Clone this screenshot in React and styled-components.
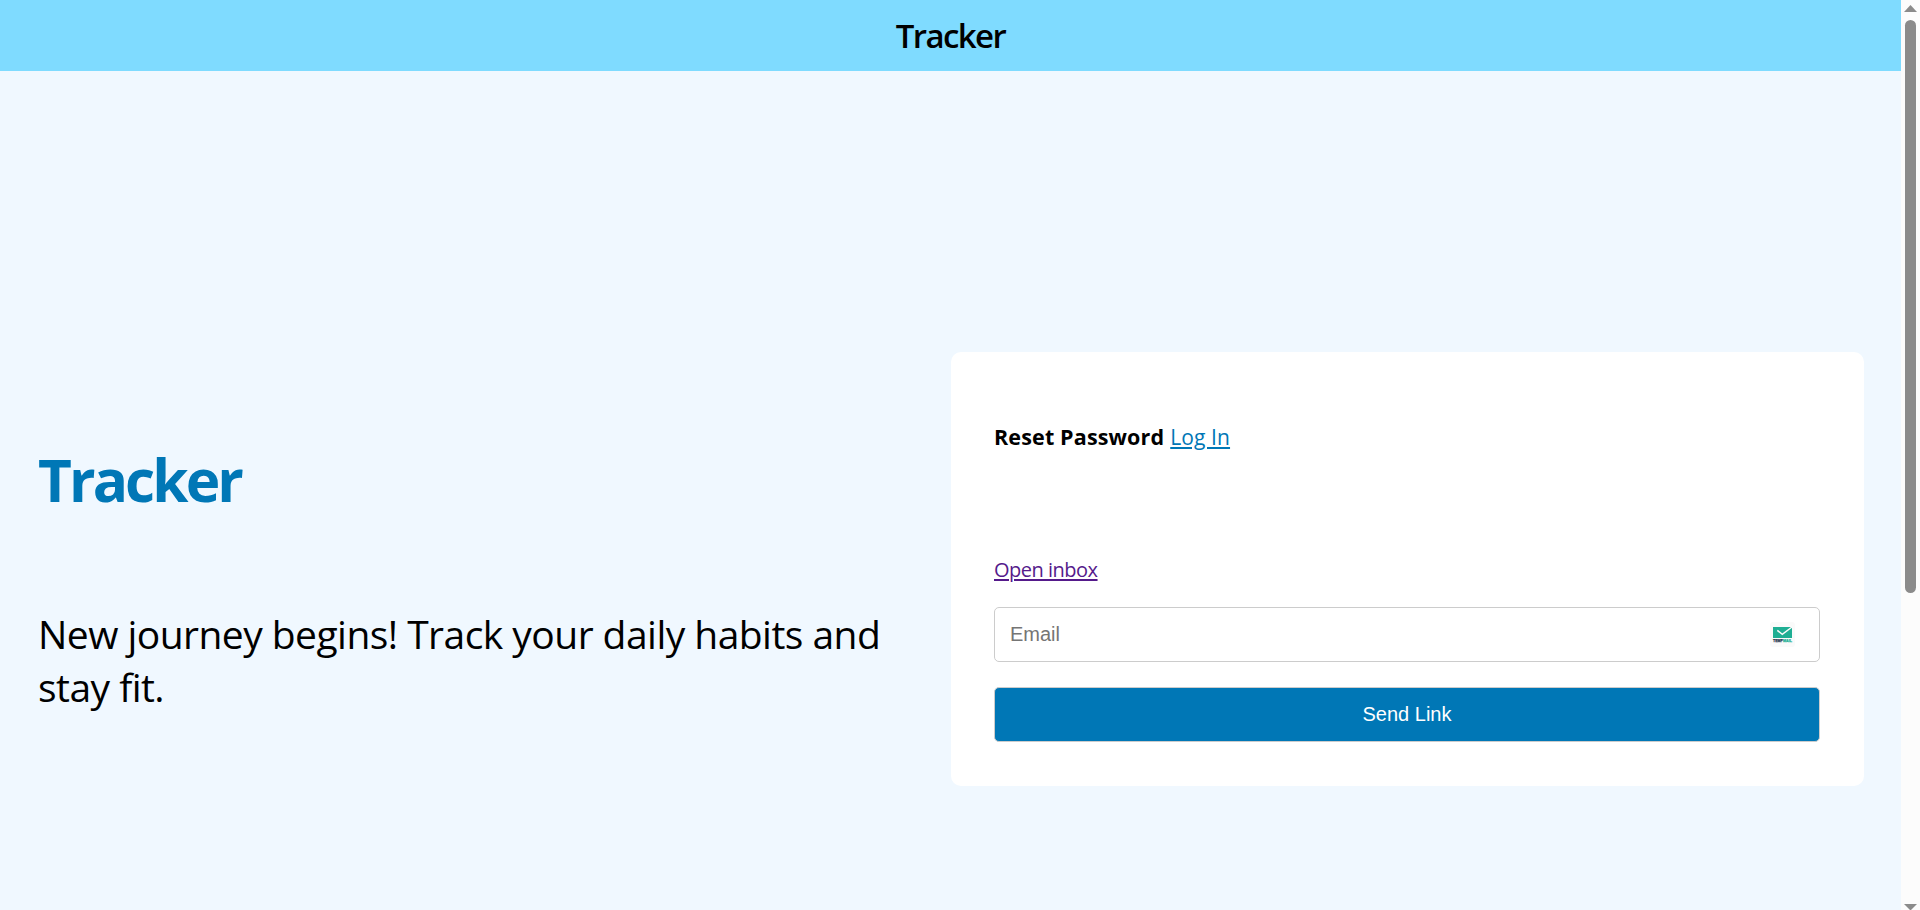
import React from "react";
import styled, { createGlobalStyle } from "styled-components";

const Global = createGlobalStyle`
  * { box-sizing: border-box; }
  html, body { margin: 0; padding: 0; overflow: hidden; }
  body { font-family: "Segoe UI", "Open Sans", "Noto Sans", sans-serif; color: #000; }
`;

const Window = styled.div`
  display: flex;
  height: 910px;
`;

const Page = styled.div`
  flex: 1;
  min-width: 0;
  display: flex;
  flex-direction: column;
  background: #f0f8ff;
`;

const Header = styled.header`
  height: 71px;
  flex: none;
  display: flex;
  align-items: center;
  justify-content: center;
  background: #7fdbff;
`;

const Brand = styled.span`
  font-size: 33px;
  line-height: 44px;
  font-weight: 600;
  letter-spacing: -1.6px;
`;

const Main = styled.main`
  display: flex;
  align-items: flex-start;
  padding: 281px 37px 0 38px;
`;

const Intro = styled.section`
  width: 913px;
  flex: none;
  padding-top: 87px;
`;

const Title = styled.h1`
  margin: 0;
  font-size: 58.5px;
  line-height: 80px;
  font-weight: 700;
  letter-spacing: -2.9px;
  color: #0077b6;
`;

const Tagline = styled.p`
  margin: 88px 0 0;
  width: 860px;
  font-size: 39px;
  line-height: 53px;
  letter-spacing: -0.54px;
`;

const Card = styled.section`
  flex: 1;
  height: 434px;
  display: flex;
  flex-direction: column;
  align-items: stretch;
  padding: 70px 44px 44px 43px;
  border-radius: 10px;
  background: #fff;
`;

const CardHead = styled.div`
  display: flex;
  align-items: baseline;
  gap: 6px;
  height: 30px;
  line-height: 30px;
`;

const CardTitle = styled.h2`
  margin: 0;
  font-size: 21.5px;
  font-weight: 700;
  letter-spacing: 0.15px;
`;

const Link = styled.a`
  font-size: ${(p) => p.$size};
  color: ${(p) => p.$color};
  letter-spacing: ${(p) => p.$tracking || "normal"};
  line-height: 28px;
  align-self: ${(p) => p.$align || "auto"};
  margin-top: ${(p) => p.$top || 0};
  text-decoration: underline;
  text-decoration-thickness: 2px;
  text-underline-offset: 2px;
`;

const Field = styled.label`
  display: flex;
  align-items: center;
  justify-content: space-between;
  height: 55px;
  margin-top: 23px;
  padding: 0 24px 0 15px;
  border: 1px solid #ccc;
  border-radius: 5px;
`;

const Input = styled.input`
  flex: 1;
  padding: 0;
  border: 0;
  outline: 0;
  background: transparent;
  font: 20px "Liberation Sans", Arial, sans-serif;
  &::placeholder { color: #757575; }
`;

const MailBadge = styled.svg`
  width: 25px;
  height: 25px;
  border-radius: 3px;
  background: #fafafa;
`;

const Submit = styled.button`
  height: 55px;
  margin-top: 25px;
  padding: 0;
  border: 1px solid #ccc;
  border-radius: 5px;
  background: #0077b6;
  color: #fff;
  font: 20px "Liberation Sans", Arial, sans-serif;
`;

const Scrollbar = styled.aside`
  width: 19px;
  flex: none;
  display: flex;
  flex-direction: column;
  align-items: center;
  padding-top: 5px;
  background: #fcfcfc;
`;

const Arrow = styled.svg`
  width: 13px;
  height: ${(p) => p.$h};
  fill: #8b8b8b;
  flex: none;
`;

const Thumb = styled.div`
  width: 11px;
  height: 573px;
  margin: 8px 0 311px 0;
  border-radius: 6px;
  background: #8b8b8b;
  flex: none;
`;

function TempMailIcon() {
  return (
    <MailBadge viewBox="0 0 25 25">
      <path d="M3 5h19v11H3z" fill="#1eae93" />
      <path d="M7.3 8.3l5 4L22 5" fill="none" stroke="#fafafa" strokeWidth="1.5" />
      <text x="3" y="20" fontSize="3.8" fontWeight="900" fontFamily="Liberation Sans, sans-serif" textLength="10" lengthAdjust="spacingAndGlyphs" fill="#263550" stroke="#263550" strokeWidth=".25">TEMP</text>
      <text x="13" y="20" fontSize="3.8" fontWeight="900" fontFamily="Liberation Sans, sans-serif" textLength="9" lengthAdjust="spacingAndGlyphs" fill="#20b095" stroke="#20b095" strokeWidth=".25">MAIL</text>
    </MailBadge>
  );
}

export default function App() {
  return (
    <>
      <Global />
      <Window>
        <Page>
          <Header>
            <Brand>Tracker</Brand>
          </Header>
          <Main>
            <Intro>
              <Title>Tracker</Title>
              <Tagline>New journey begins! Track your daily habits and stay fit.</Tagline>
            </Intro>
            <Card>
              <CardHead>
                <CardTitle>Reset Password</CardTitle>
                <Link href="#login" $size="21px" $color="#0077b6" $tracking="0.1px">Log In</Link>
              </CardHead>
              <Link href="#inbox" $size="20px" $color="#551a8b" $align="flex-start" $top="104px" $tracking="-0.5px">Open inbox</Link>
              <Field>
                <Input type="email" placeholder="Email" />
                <TempMailIcon />
              </Field>
              <Submit type="button">Send Link</Submit>
            </Card>
          </Main>
        </Page>
        <Scrollbar>
          <Arrow $h="7px" viewBox="0 0 13 7"><path d="M6.5 0L13 7H0z" /></Arrow>
          <Thumb />
          <Arrow $h="6px" viewBox="0 0 13 6"><path d="M0 0h13L7 6H6z" /></Arrow>
        </Scrollbar>
      </Window>
    </>
  );
}
